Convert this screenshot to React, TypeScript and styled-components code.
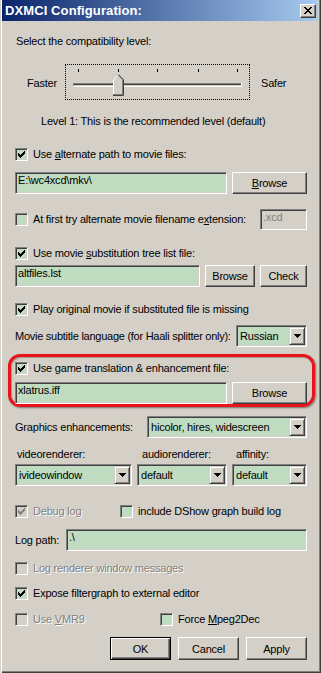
import React from "react";
import styled, { createGlobalStyle } from "styled-components";

const GlobalStyle = createGlobalStyle`
  html, body {
    margin: 0;
    padding: 0;
    background: #d4d0c8;
  }
  body {
    font-family: "Liberation Sans", Arial, sans-serif;
    font-size: 11px;
    color: #000;
  }
`;

const Window = styled.div`
  width: 321px;
  height: 673px;
  box-sizing: border-box;
  padding: 0 2px 2px 2px;
  background: #d4d0c8;
  box-shadow: inset 1px 0 0 #d4d0c8, inset 2px 0 0 #fff, inset -1px -1px 0 #404040,
    inset -2px -2px 0 #808080;
  display: flex;
  flex-direction: column;
`;

const TitleBar = styled.div`
  height: 21px;
  margin-right: 1px;
  padding: 0 2px 0 3px;
  display: flex;
  align-items: center;
  justify-content: space-between;
  background: linear-gradient(to right, #0a246a, #a6caf0);
`;

const Title = styled.span`
  color: #fff;
  font-weight: 700;
  font-size: 13px;
  letter-spacing: 0.1px;
`;

const CloseButton = styled.div`
  width: 16px;
  height: 14px;
  box-sizing: border-box;
  display: flex;
  align-items: center;
  justify-content: center;
  background: #d4d0c8;
  border: 1px solid;
  border-color: #fff #404040 #404040 #fff;
  box-shadow: inset -1px -1px 0 #808080;
`;

const Body = styled.div`
  padding: 0 12px 0 13px;
  display: flex;
  flex-direction: column;
  letter-spacing: -0.2px;
`;

const Text = styled.div<{ $mt: number; $indent?: number }>`
  margin-top: ${(p) => p.$mt}px;
  padding-left: ${(p) => p.$indent ?? 0}px;
  line-height: 13px;
  white-space: nowrap;
`;

const Label = styled.span<{ $tight?: boolean }>`
  white-space: nowrap;
  line-height: 13px;
  letter-spacing: ${(p) => (p.$tight ? "-0.26px" : "inherit")};
`;

const Row = styled.div<{ $mt: number; $h: number; $spread?: boolean }>`
  margin-top: ${(p) => p.$mt}px;
  height: ${(p) => p.$h}px;
  display: flex;
  align-items: center;
  justify-content: ${(p) => (p.$spread ? "space-between" : "flex-start")};
  gap: 5px;
`;

const SplitRow = styled.div<{ $mt: number; $col: number }>`
  margin-top: ${(p) => p.$mt}px;
  height: 13px;
  display: grid;
  grid-template-columns: ${(p) => p.$col}px auto;
  align-items: center;
`;

const SliderRow = styled.div`
  margin-top: 16px;
  height: 36px;
  display: grid;
  grid-template-columns: 50px 185px auto;
`;

const SliderLabel = styled.span<{ $pad: number }>`
  padding-left: ${(p) => p.$pad}px;
  margin-top: 13px;
  line-height: 13px;
`;

const SliderFrame = styled.div`
  width: 185px;
  height: 36px;
  box-sizing: border-box;
  border: 1px dotted #000;
  display: flex;
`;

const CheckLabel = styled.label<{ $disabled?: boolean }>`
  display: flex;
  align-items: center;
  gap: 5px;
  height: 13px;
  line-height: 13px;
  white-space: nowrap;
  color: ${(p) => (p.$disabled ? "#808080" : "#000")};
  text-shadow: ${(p) => (p.$disabled ? "1px 1px 0 #fff" : "none")};
`;

const Box = styled.span<{ $disabled?: boolean }>`
  width: 13px;
  height: 13px;
  flex: none;
  box-sizing: border-box;
  display: flex;
  align-items: center;
  justify-content: center;
  background: ${(p) => (p.$disabled ? "#d4d0c8" : "#c0dcc0")};
  border: 1px solid;
  border-color: #808080 #fff #fff #808080;
  box-shadow: inset 1px 1px 0 #404040, inset -1px -1px 0 #d4d0c8;
`;

const Edit = styled.div<{ $w?: number; $disabled?: boolean; $push?: boolean }>`
  ${(p) => (p.$w ? `width: ${p.$w}px; flex: none;` : "flex: 1;")}
  margin-left: ${(p) => (p.$push ? "auto" : "0")};
  height: 100%;
  box-sizing: border-box;
  padding: 1px 2px;
  line-height: 13px;
  white-space: nowrap;
  overflow: hidden;
  background: ${(p) => (p.$disabled ? "#d4d0c8" : "#c0dcc0")};
  color: ${(p) => (p.$disabled ? "#808080" : "#000")};
  border: 1px solid;
  border-color: #808080 #fff #fff #808080;
  box-shadow: inset 1px 1px 0 #404040, inset -1px -1px 0 #d4d0c8;
`;

const Button = styled.div<{ $w: number; $default?: boolean }>`
  width: ${(p) => p.$w}px;
  flex: none;
  height: 100%;
  box-sizing: border-box;
  display: flex;
  align-items: center;
  justify-content: center;
  background: #d4d0c8;
  border: 1px solid;
  border-color: ${(p) => (p.$default ? "#000" : "#fff #404040 #404040 #fff")};
  box-shadow: ${(p) =>
    p.$default
      ? "inset 1px 1px 0 #fff, inset -1px -1px 0 #404040, inset -2px -2px 0 #808080"
      : "inset -1px -1px 0 #808080"};
`;

const SelectBox = styled.div<{ $w?: number }>`
  ${(p) => (p.$w ? `width: ${p.$w}px; flex: none;` : "")}
  height: 22px;
  box-sizing: border-box;
  display: flex;
  align-items: center;
  padding: 1px;
  background: #c0dcc0;
  border: 1px solid;
  border-color: #808080 #fff #fff #808080;
  box-shadow: inset 1px 1px 0 #404040, inset -1px -1px 0 #d4d0c8;
`;

const SelectValue = styled.span`
  flex: 1;
  padding-left: 2px;
  line-height: 13px;
  white-space: nowrap;
  overflow: hidden;
`;

const ArrowButton = styled.span`
  width: 16px;
  height: 18px;
  flex: none;
  box-sizing: border-box;
  display: flex;
  align-items: center;
  justify-content: center;
  background: #d4d0c8;
  border: 1px solid;
  border-color: #d4d0c8 #404040 #404040 #d4d0c8;
  box-shadow: inset 1px 1px 0 #fff, inset -1px -1px 0 #808080;
`;

const Highlight = styled.div`
  margin: 7px -8px 0 -7px;
  padding: 5px 5px 0 4px;
  height: 53px;
  box-sizing: border-box;
  border: 3px solid #e8131b;
  border-radius: 12px;
  box-shadow: 1px 1px 2px rgba(0, 0, 0, 0.45), inset 1px 1px 1px rgba(0, 0, 0, 0.25);
  display: flex;
  flex-direction: column;
`;

const RendererGrid = styled.div`
  margin-top: 10px;
  display: grid;
  grid-template-columns: 117px 90px 1fr;
  grid-template-rows: 13px 22px;
  column-gap: 5px;
  row-gap: 3px;
`;

const GridLabel = styled.span<{ $pad: number }>`
  padding-left: ${(p) => p.$pad}px;
  line-height: 13px;
`;

const ButtonRow = styled.div`
  margin-top: 11px;
  height: 23px;
  display: flex;
  justify-content: flex-end;
  gap: 7px;
`;

const CHECK_PIXELS: [number, number, number][] = [
  [6, 0, 1],
  [5, 1, 2],
  [0, 2, 1],
  [4, 2, 3],
  [0, 3, 2],
  [3, 3, 3],
  [0, 4, 5],
  [1, 5, 3],
  [2, 6, 1],
];

const CheckMark = ({ color }: { color: string }) => (
  <svg width="7" height="7" viewBox="0 0 7 7" shapeRendering="crispEdges">
    {CHECK_PIXELS.map(([x, y, w], i) => (
      <rect key={i} x={x} y={y} width={w} height={1} fill={color} />
    ))}
  </svg>
);

const Check = ({
  checked,
  disabled,
  children,
}: {
  checked?: boolean;
  disabled?: boolean;
  children: React.ReactNode;
}) => (
  <CheckLabel $disabled={disabled}>
    <Box $disabled={disabled}>{checked && <CheckMark color={disabled ? "#808080" : "#000"} />}</Box>
    <span>{children}</span>
  </CheckLabel>
);

const Arrow = () => (
  <svg width="7" height="4" viewBox="0 0 7 4" shapeRendering="crispEdges">
    <path d="M0 0h7v1h-1v1h-1v1h-1v1h-1v-1h-1v-1h-1v-1h-1z" fill="#000" />
  </svg>
);

const Select = ({ value, w }: { value: string; w?: number }) => (
  <SelectBox $w={w}>
    <SelectValue>{value}</SelectValue>
    <ArrowButton>
      <Arrow />
    </ArrowButton>
  </SelectBox>
);

const TICKS = [12, 52, 91, 132, 171];

const Slider = () => (
  <SliderFrame>
    <svg width="183" height="34" viewBox="0 0 183 34" shapeRendering="crispEdges">
      {TICKS.map((x) => (
        <rect key={x} x={x} y={4} width={1} height={3} fill="#000" />
      ))}
      <rect x={7} y={18} width={169} height={1} fill="#808080" />
      <rect x={7} y={19} width={168} height={1} fill="#404040" />
      <rect x={7} y={20} width={168} height={1} fill="#d4d0c8" />
      <rect x={7} y={21} width={169} height={1} fill="#fff" />
      <rect x={7} y={18} width={1} height={3} fill="#808080" />
      <rect x={175} y={18} width={1} height={4} fill="#fff" />
      <g shapeRendering="auto">
        <path d="M47 15 L52 10 L57 15 V29 H47 Z" fill="#d4d0c8" />
        <path d="M47.5 29 V14.8 L52 10.3" stroke="#fff" fill="none" />
        <path d="M52 10.3 L56.5 14.8 V29.5 H47" stroke="#808080" fill="none" />
        <path d="M52.5 9.6 L57.5 14.6 V30.5 H47" stroke="#404040" fill="none" />
      </g>
    </svg>
  </SliderFrame>
);

export default function App() {
  return (
    <>
      <GlobalStyle />
      <Window>
        <TitleBar>
          <Title>DXMCI Configuration:</Title>
          <CloseButton>
            <svg width="8" height="7" viewBox="0 0 8 7" shapeRendering="crispEdges">
              <path
                d="M0 0h2v1h1v1h2v-1h1v-1h2v1h-1v1h-1v1h-1v1h1v1h1v1h1v1h-2v-1h-1v-1h-2v1h-1v1h-2v-1h1v-1h1v-1h1v-1h-1v-1h-1v-1h-1z"
                fill="#000"
              />
            </svg>
          </CloseButton>
        </TitleBar>
        <Body>
          <Text $mt={14} $indent={1}>
            Select the compatibility level:
          </Text>
          <SliderRow>
            <SliderLabel $pad={12}>Faster</SliderLabel>
            <Slider />
            <SliderLabel $pad={11}>Safer</SliderLabel>
          </SliderRow>
          <Text $mt={15} $indent={26}>
            Level 1: This is the recommended level (default)
          </Text>
          <Row $mt={20} $h={13}>
            <Check checked>
              Use <u>a</u>lternate path to movie files:
            </Check>
          </Row>
          <Row $mt={11} $h={22}>
            <Edit>{"E:\\wc4xcd\\mkv\\"}</Edit>
            <Button $w={75}>
              <span>
                <u>B</u>rowse
              </span>
            </Button>
          </Row>
          <Row $mt={15} $h={21}>
            <Check>
              At first try alternate movie filename e<u>x</u>tension:
            </Check>
            <Edit $w={47} $disabled $push>
              .xcd
            </Edit>
          </Row>
          <Row $mt={17} $h={13}>
            <Check checked>
              Use movie <u>s</u>ubstitution tree list file:
            </Check>
          </Row>
          <Row $mt={5} $h={22}>
            <Edit>altfiles.lst</Edit>
            <Button $w={50}>Browse</Button>
            <Button $w={47}>Check</Button>
          </Row>
          <Row $mt={16} $h={13}>
            <Check checked>Play original movie if substituted file is missing</Check>
          </Row>
          <Row $mt={9} $h={22} $spread>
            <Label $tight>Movie subtitle language (for Haali splitter only):</Label>
            <Select value="Russian" w={71} />
          </Row>
          <Highlight>
            <Row $mt={0} $h={13}>
              <Check checked>Use game translation &amp; enhancement file:</Check>
            </Row>
            <Row $mt={7} $h={22}>
              <Edit>xlatrus.iff</Edit>
              <Button $w={75}>Browse</Button>
            </Row>
          </Highlight>
          <Row $mt={9} $h={22} $spread>
            <Label>Graphics enhancements:</Label>
            <Select value="hicolor, hires, widescreen" w={160} />
          </Row>
          <RendererGrid>
            <GridLabel $pad={2}>videorenderer:</GridLabel>
            <GridLabel $pad={5}>audiorenderer:</GridLabel>
            <GridLabel $pad={4}>affinity:</GridLabel>
            <Select value="ivideowindow" />
            <Select value="default" />
            <Select value="default" />
          </RendererGrid>
          <SplitRow $mt={19} $col={105}>
            <Check checked disabled>
              Debug log
            </Check>
            <Check>include DShow graph build log</Check>
          </SplitRow>
          <Row $mt={11} $h={22}>
            <Label>Log path:</Label>
            <Edit $w={241} $push>
              {".\\"}
            </Edit>
          </Row>
          <Row $mt={11} $h={13}>
            <Check disabled>Log renderer window messages</Check>
          </Row>
          <Row $mt={12} $h={13}>
            <Check checked>Expose filtergraph to external editor</Check>
          </Row>
          <SplitRow $mt={13} $col={145}>
            <Check disabled>
              Use <u>V</u>MR9
            </Check>
            <Check>
              Force <u>M</u>peg2Dec
            </Check>
          </SplitRow>
          <ButtonRow>
            <Button $w={61} $default>
              OK
            </Button>
            <Button $w={61}>Cancel</Button>
            <Button $w={61}>Apply</Button>
          </ButtonRow>
        </Body>
      </Window>
    </>
  );
}
